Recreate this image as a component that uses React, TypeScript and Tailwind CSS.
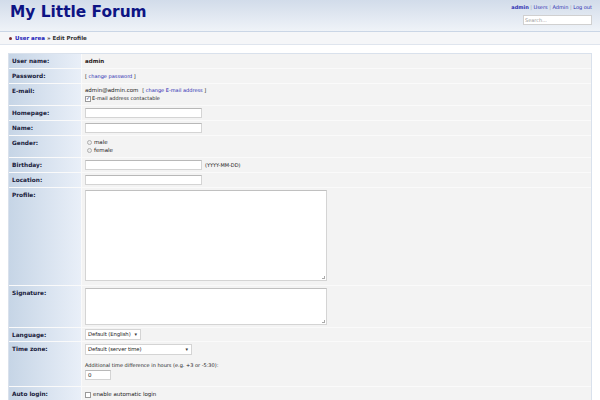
import React from "react";

const F = { fontFamily: '"DejaVu Sans", Verdana, sans-serif' };

function Input({ w = "w-[117px]", value = "" }: { w?: string; value?: string }) {
  return (
    <div className={`${w} h-[10px] bg-white border border-[#d4d4d4] border-t-[#b8b8b8] text-[5.5px] leading-[8px] px-[2px] text-[#222]`}>
      {value}
    </div>
  );
}

function Check({ checked = false }: { checked?: boolean }) {
  return (
    <span className="inline-flex items-center justify-center w-[6px] h-[6px] border border-[#9a9a9a] bg-white text-[5px] leading-none text-[#2a3f8f] mr-[1px]">
      {checked ? "✓" : ""}
    </span>
  );
}

function Radio() {
  return <span className="inline-block w-[5px] h-[5px] rounded-full border border-[#b0b0b0] bg-[#ececec] mr-[2px] ml-[2px]" />;
}

function Select({ w, label }: { w: string; label: string }) {
  return (
    <div className={`${w} h-[11px] bg-white border border-[#d4d4d4] flex items-center justify-between pl-[2px] pr-[3px] text-[5.3px] tracking-[-0.1px] text-[#222]`}>
      <span className="whitespace-nowrap">{label}</span>
      <span className="text-[5px] text-[#333] ml-[2px]">▾</span>
    </div>
  );
}

function Row({ label, h, children, pt = "pt-[4px]" }: { label: string; h: string; children?: React.ReactNode; pt?: string }) {
  return (
    <div className={`flex ${h}`}>
      <div className="w-[72px] shrink-0 bg-gradient-to-r from-[#c6d5e6] to-[#e9eff8] px-[3px] pt-[4px] text-[5.8px] leading-[7px] font-bold text-[#18203a]">
        {label}
      </div>
      <div className={`flex-1 ml-px bg-[#f3f3f3] px-[3px] ${pt} text-[5.5px] leading-[7px] text-[#222]`}>{children}</div>
    </div>
  );
}

export default function App() {
  return (
    <div className="w-[600px] h-[400px] overflow-hidden bg-white" style={F}>
      {/* header */}
      <div className="h-[32px] bg-gradient-to-b from-[#d2dcea] to-[#eff3f8] border-b border-[#cad6e6] flex justify-between px-[8px]">
        <div className="pl-[2px] pt-[3px] text-[15.4px] leading-[18px] font-bold text-[#0d1484]">My Little Forum</div>
        <div className="flex flex-col items-end pt-[4px]">
          <div className="text-[5px] leading-[6px] text-[#2b2bb0]">
            <span className="font-bold">admin</span>
            <span className="text-[#9aa6b8]"> | </span>
            <span>Users</span>
            <span className="text-[#9aa6b8]"> | </span>
            <span>Admin</span>
            <span className="text-[#9aa6b8]"> | </span>
            <span>Log out</span>
          </div>
          <div className="mt-[5px] w-[69px] h-[10px] bg-white border border-[#d0d0d0] text-[5px] leading-[8px] px-[1px] text-[#999]">Search...</div>
        </div>
      </div>
      {/* subnav */}
      <div className="h-[13px] bg-[#f5f6f8] border-b border-[#dfe5ee] flex items-center px-[9px] text-[5.5px] font-bold">
        <span className="inline-block w-[3px] h-[3px] rounded-full bg-[#7a2a2a] mr-[3px]" />
        <span className="text-[#2424b8]">User area</span>
        <span className="text-[#333] ml-[2px]">» Edit Profile</span>
      </div>
      {/* table */}
      <div className="mx-[8px] mt-[8px] border border-[#d9e1ec] bg-[#fafafa] flex flex-col gap-px">
        <Row label="User name:" h="h-[14px]">
          <span className="font-bold text-[#2a2020]">admin</span>
        </Row>
        <Row label="Password:" h="h-[14px]">
          <span className="text-[5px]">[ <span className="text-[#2a2ab0]">change password</span> ]</span>
        </Row>
        <Row label="E-mail:" h="h-[21px]" pt="pt-[3px]">
          <div className="text-[5.5px] leading-[7px]">
            admin@admin.com <span className="text-[5px] ml-[2px]">[ <span className="text-[#2a2ab0]">change E-mail address</span> ]</span>
          </div>
          <div className="flex items-center text-[5px] leading-[7px] mt-[1px]">
            <Check checked />
            <span>E-mail address contactable</span>
          </div>
        </Row>
        <Row label="Homepage:" h="h-[14px]" pt="pt-[2px]">
          <Input />
        </Row>
        <Row label="Name:" h="h-[14px]" pt="pt-[2px]">
          <Input />
        </Row>
        <Row label="Gender:" h="h-[21px]" pt="pt-[3px]">
          <div className="flex items-center leading-[7px]"><Radio /><span>male</span></div>
          <div className="flex items-center leading-[7px] mt-[1px]"><Radio /><span>female</span></div>
        </Row>
        <Row label="Birthday:" h="h-[14px]" pt="pt-[2px]">
          <div className="flex items-center gap-[3px]">
            <Input />
            <span className="text-[5px]">(YYYY-MM-DD)</span>
          </div>
        </Row>
        <Row label="Location:" h="h-[14px]" pt="pt-[2px]">
          <Input />
        </Row>
        <Row label="Profile:" h="h-[97px]" pt="pt-[2px]">
          <div className="relative w-[242px] h-[91px] bg-white border border-[#d4d4d4] border-t-[#c0c0c0]">
            <span className="absolute right-[1px] bottom-[1px] w-[3px] h-[3px] border-r border-b border-[#aaa]" />
          </div>
        </Row>
        <Row label="Signature:" h="h-[41px]" pt="pt-[2px]">
          <div className="relative w-[242px] h-[37px] bg-white border border-[#d4d4d4] border-t-[#c0c0c0]">
            <span className="absolute right-[1px] bottom-[1px] w-[3px] h-[3px] border-r border-b border-[#aaa]" />
          </div>
        </Row>
        <Row label="Language:" h="h-[13px]" pt="pt-[1px]">
          <Select w="w-[56px]" label="Default (English)" />
        </Row>
        <Row label="Time zone:" h="h-[44px]" pt="pt-[2px]">
          <Select w="w-[107px]" label="Default (server time)" />
          <div className="text-[5px] leading-[6px] mt-[7px]">Additional time difference in hours (e.g. +3 or -5:30):</div>
          <div className="mt-[2px]">
            <Input w="w-[26px]" value="0" />
          </div>
        </Row>
        <Row label="Auto login:" h="h-[16px]" pt="pt-[4px]">
          <div className="flex items-center">
            <Check />
            <span className="ml-[1px]">enable automatic login</span>
          </div>
        </Row>
      </div>
    </div>
  );
}
